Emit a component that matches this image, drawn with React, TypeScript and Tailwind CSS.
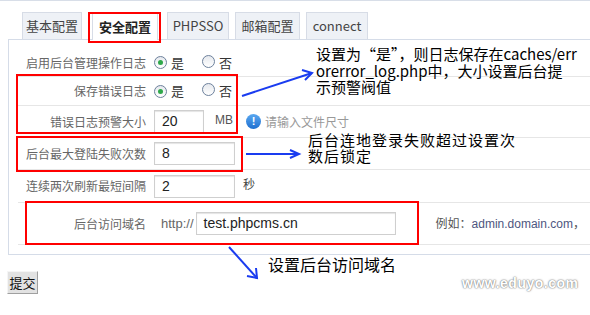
import React from "react";

const cjk = "font-['Noto_Sans_CJK_SC','Liberation_Sans',sans-serif]";

const Radio = ({ checked }: { checked?: boolean }) => (
  <span className="inline-flex items-center justify-center w-[13px] h-[13px] rounded-full border border-[#6d819c] bg-gradient-to-b from-[#e6e9ee] to-white">
    {checked && <span className="w-[5px] h-[5px] rounded-full bg-[#2fa84a]" />}
  </span>
);

const Row = ({ label, h, children }: { label: string; h: string; children: React.ReactNode }) => (
  <div className={`flex items-center border-b border-[#e6e6e6] ${h}`}>
    <div className="w-[128px] text-right text-[12px] text-[#666]">{label}</div>
    <div className="flex items-center pl-[8px] text-[12px] text-[#555]">{children}</div>
  </div>
);

const Input = ({ w, value }: { w: string; value: string }) => (
  <div className={`${w} h-[23px] border border-[#cfcfcf] shadow-[inset_0_1px_1px_#e4e4e4] bg-white flex items-center pl-[7px] text-[14px] text-[#222] font-['Liberation_Sans',sans-serif]`}>
    {value}
  </div>
);

const tabs = [
  { t: "基本配置", w: "w-[60px]", ml: "ml-0" },
  { t: "安全配置", w: "w-[66px]", ml: "ml-[10px]", active: true },
  { t: "PHPSSO", w: "w-[62px]", ml: "ml-[9px]" },
  { t: "邮箱配置", w: "w-[65px]", ml: "ml-[6px]" },
  { t: "connect", w: "w-[62px]", ml: "ml-[6px]" },
];

export default function App() {
  return (
    <div className={`relative w-[590px] h-[315px] overflow-hidden bg-white border-t border-[#d8dee8] ${cjk}`}>
      <div className="flex ml-[22px] mt-[11px] h-[27px]">
        {tabs.map((tab) => (
          <div
            key={tab.t}
            className={`${tab.w} ${tab.ml} flex items-center justify-center text-[13px] border border-[#d7dce6] border-b-0 ${
              tab.active ? "bg-white font-bold text-[#222] relative z-10 h-[28px]" : "bg-[#eef1f6] text-[#444]"
            }`}
          >
            {tab.t}
          </div>
        ))}
      </div>

      <div className="ml-[8px] w-[640px] border border-[#d5dce8] pl-[9px] pt-[9px] pb-[9px]">
        <Row label="启用后台管理操作日志" h="h-[28px]">
          <Radio checked />
          <span className="ml-[4px] text-[13px] text-[#333]">是</span>
          <span className="ml-[18px]"><Radio /></span>
          <span className="ml-[4px] text-[13px] text-[#333]">否</span>
        </Row>
        <Row label="保存错误日志" h="h-[29px]">
          <Radio checked />
          <span className="ml-[4px] text-[13px] text-[#333]">是</span>
          <span className="ml-[18px]"><Radio /></span>
          <span className="ml-[4px] text-[13px] text-[#333]">否</span>
        </Row>
        <Row label="错误日志预警大小" h="h-[32px]">
          <Input w="w-[50px]" value="20" />
          <span className="ml-[11px] -mt-[4px] text-[12px] text-[#555] font-['Liberation_Sans',sans-serif]">MB</span>
          <span className="ml-[13px] w-[15px] h-[15px] rounded-full bg-gradient-to-b from-[#5aa8f0] to-[#1c6fd0] text-white text-[11px] font-bold flex items-center justify-center font-['Liberation_Sans',sans-serif]">!</span>
          <span className="ml-[4px] text-[12px] text-[#999]">请输入文件尺寸</span>
        </Row>
        <Row label="后台最大登陆失败次数" h="h-[32px]">
          <Input w="w-[81px]" value="8" />
        </Row>
        <Row label="连续两次刷新最短间隔" h="h-[33px]">
          <Input w="w-[81px]" value="2" />
          <span className="ml-[8px] -mt-[4px] text-[12px] text-[#444]">秒</span>
        </Row>
        <Row label="后台访问域名" h="h-[42px]">
          <span className="ml-[7px] text-[13px] text-[#666] font-['Liberation_Sans',sans-serif]">http://</span>
          <span className="ml-[2px]"><Input w="w-[200px]" value="test.phpcms.cn" /></span>
          <span className="ml-[40px] text-[12px] text-[#555]">例如：<span className="text-[#4e5680] font-['Liberation_Sans',sans-serif]">admin.domain.com</span>，</span>
        </Row>
      </div>

      <button className="ml-[7px] mt-[16px] w-[31px] h-[23px] bg-[#e2e2e2] border border-[#a0a0a0] border-t-[#f5f5f5] border-l-[#f5f5f5] text-[13px] text-[#111] flex items-center justify-center">
        提交
      </button>

      {/* red highlight boxes */}
      <div className="absolute left-[88px] top-[11px] w-[73px] h-[31px] border-2 border-[#ff0000] z-20" />
      <div className="absolute left-[16px] top-[73px] w-[222px] h-[60px] border-2 border-[#ff0000]" />
      <div className="absolute left-[16px] top-[135px] w-[227px] h-[36px] border-2 border-[#ff0000]" />
      <div className="absolute left-[25px] top-[200px] w-[394px] h-[44px] border-2 border-[#ff0000]" />

      {/* annotations */}
      <svg className="absolute inset-0 pointer-events-none" width="590" height="315">
        <g stroke="#1a3cf0" strokeWidth="2" fill="none">
          <line x1="242" y1="95" x2="312" y2="72" />
          <polyline points="302,69 312,72 305,79" />
          <line x1="246" y1="153" x2="299" y2="153" />
          <polyline points="290,149 299,153 290,157" />
          <line x1="229" y1="246" x2="257" y2="277" />
          <polyline points="247,275 257,277 256,267" />
        </g>
      </svg>
      <div className="absolute left-[316px] top-[45px] text-[15px] leading-[16.5px] text-black whitespace-nowrap">
        <div>设置为“是”，则日志保存在caches/err</div>
        <div>orerror_log.php中，大小设置后台提</div>
        <div>示预警阀值</div>
      </div>
      <div className="absolute left-[308px] top-[131px] text-[15px] leading-[16px] tracking-[1px] text-black whitespace-nowrap">
        <div>后台连地登录失败超过设置次</div>
        <div>数后锁定</div>
      </div>
      <div className="absolute left-[268px] top-[254px] text-[16px] leading-[18px] text-black whitespace-nowrap">
        设置后台访问域名
      </div>
      <div className="absolute left-[462px] top-[272px] text-[14px] font-bold text-white tracking-[0.5px] font-['Liberation_Sans',sans-serif] [text-shadow:0_0_2px_#777,0_0_1px_#777]">
        www.eduyo.com
      </div>
    </div>
  );
}
